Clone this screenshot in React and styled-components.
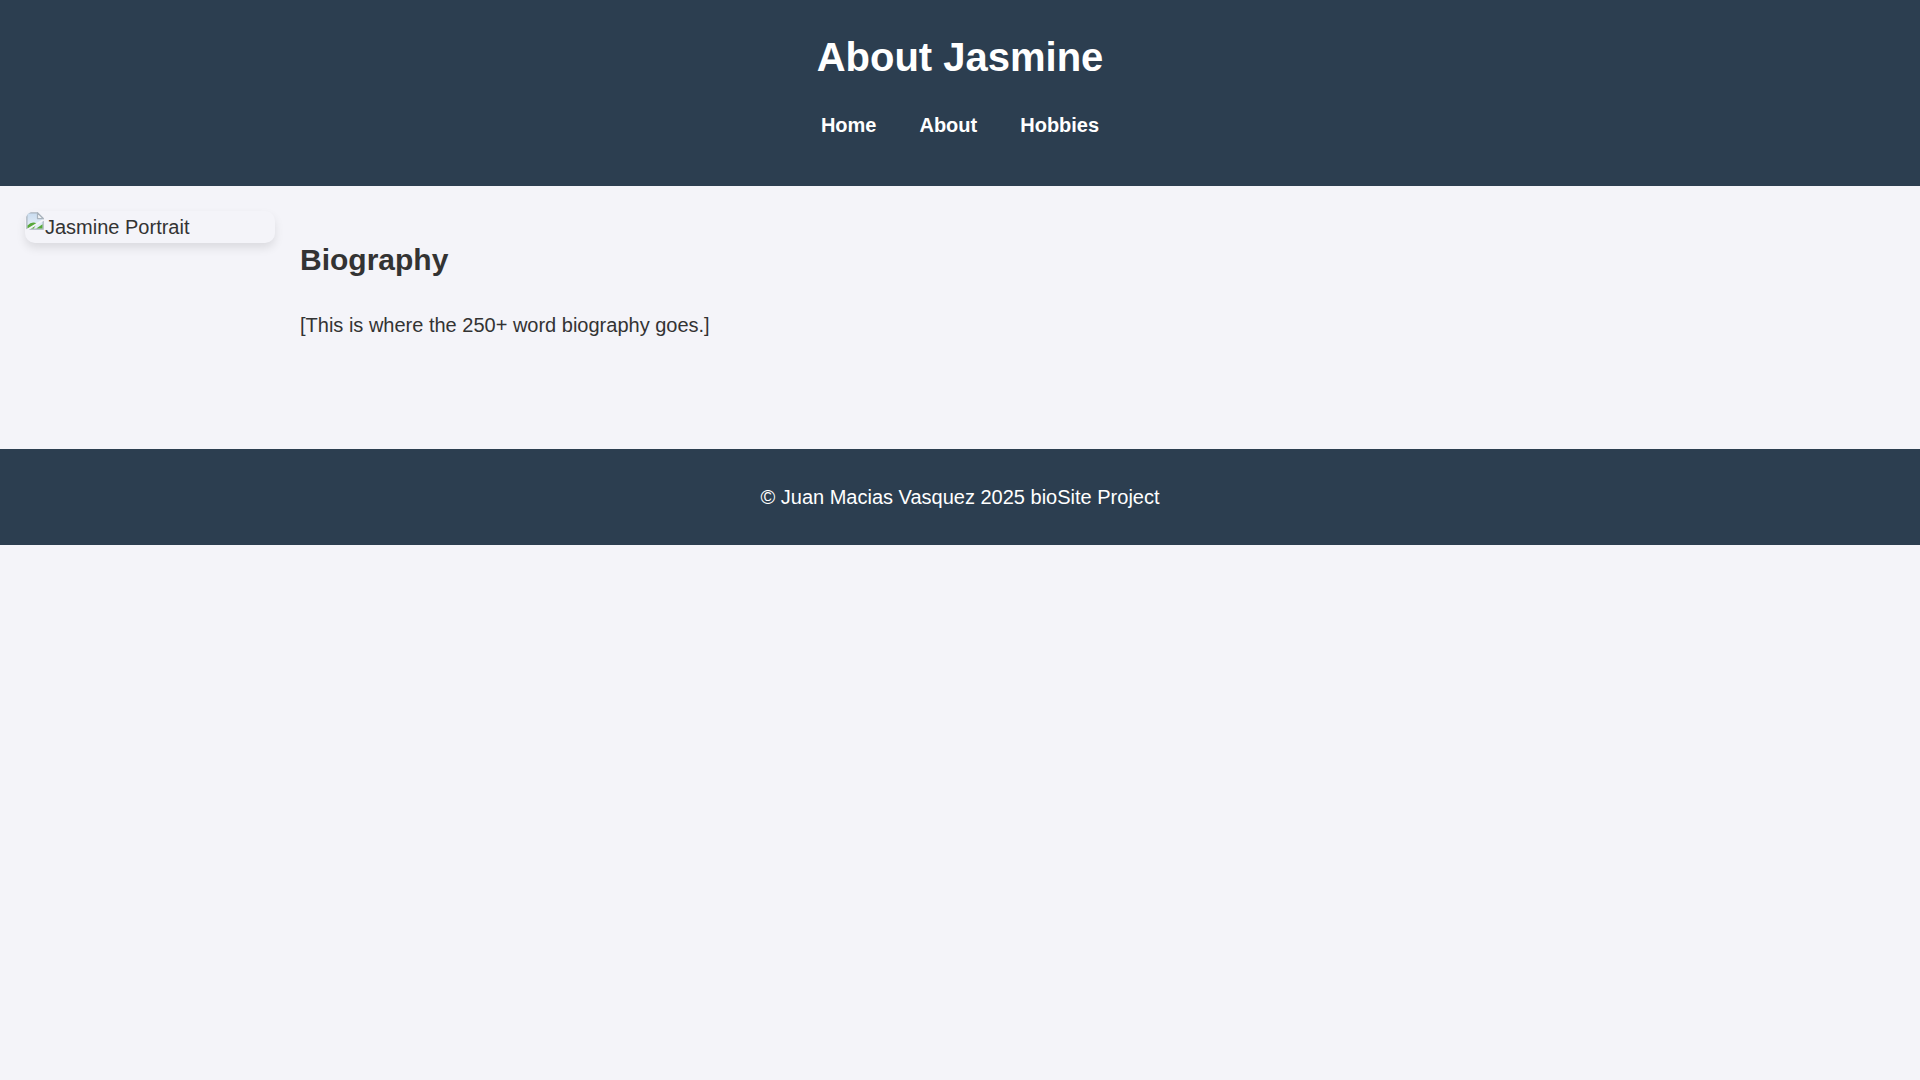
import React from "react";
import styled, { createGlobalStyle } from "styled-components";

const GlobalStyle = createGlobalStyle`
  html, body {
    margin: 0;
    padding: 0;
    background: #f4f4f9;
  }
  body {
    font-family: "Liberation Sans", Arial, sans-serif;
    color: #333;
    font-size: 20px;
  }
  * { box-sizing: border-box; }
`;

const Header = styled.header`
  background: #2c3e50;
  color: #fff;
  text-align: center;
  padding: 34px 20px 49px;
`;

const Title = styled.h1`
  margin: 0;
  font-size: 40px;
  font-weight: 700;
  line-height: 46px;
`;

const NavList = styled.ul`
  list-style: none;
  margin: 34px 0 0;
  padding: 0;
  display: flex;
  justify-content: center;
  gap: 43px;
`;

const NavLink = styled.a`
  color: #fff;
  text-decoration: none;
  font-weight: 700;
  font-size: 20px;
  line-height: 23px;
`;

const Main = styled.main`
  display: flex;
  align-items: flex-start;
  gap: 25px;
  padding: 25px 25px 111.5px;
`;

const Portrait = styled.div`
  flex: 0 0 250px;
  width: 250px;
  height: 32px;
  border-radius: 10px;
  box-shadow: 0 5px 10px rgba(0, 0, 0, 0.1);
  display: flex;
  align-items: flex-start;
  overflow: hidden;
`;

const AltText = styled.span`
  font-size: 20px;
  line-height: 23px;
  margin-top: 5px;
  color: #333;
  white-space: nowrap;
`;

const Bio = styled.section`
  flex: 1;
`;

const BioTitle = styled.h2`
  margin: 32.4px 0 0;
  font-size: 30px;
  font-weight: 700;
  line-height: 34.5px;
`;

const BioText = styled.p`
  margin: 36.6px 0 0;
  font-size: 20px;
  line-height: 23px;
`;

const Footer = styled.footer`
  background: #2c3e50;
  color: #fff;
  text-align: center;
  padding: 37px 20px 36px;
  font-size: 20px;
  line-height: 23px;
`;

const FooterText = styled.p`
  margin: 0;
`;

const BrokenIcon = () => (
  <svg width="20" height="20" viewBox="0 0 16 16" style={{ flex: "0 0 20px" }}>
    <defs>
      <linearGradient id="sky" x1="0" y1="0" x2="0" y2="1">
        <stop offset="0" stopColor="#c9dcf0" />
        <stop offset="1" stopColor="#eaf1f8" />
      </linearGradient>
    </defs>
    <path d="M1.5 1.5 H10 L14.5 6 V14.5 H1.5 Z" fill="url(#sky)" stroke="#a9b3bd" strokeWidth="1" />
    <path d="M10 1.5 V6 H14.5 Z" fill="#f2f4f6" stroke="#a9b3bd" strokeWidth="1" strokeLinejoin="round" />
    <path d="M2 14 V11.5 Q5.5 8 9.5 10 L7 14 Z" fill="#57a83a" />
    <path d="M9 14 L14 10.5 V14 Z" fill="#57a83a" />
    <path d="M1 15.5 L15 7" stroke="#f4f4f9" strokeWidth="1.6" />
  </svg>
);

export default function App() {
  return (
    <>
      <GlobalStyle />
      <Header>
        <Title>About Jasmine</Title>
        <nav>
          <NavList>
            <li><NavLink href="#">Home</NavLink></li>
            <li><NavLink href="#">About</NavLink></li>
            <li><NavLink href="#">Hobbies</NavLink></li>
          </NavList>
        </nav>
      </Header>
      <Main>
        <Portrait role="img" aria-label="Jasmine Portrait">
          <BrokenIcon />
          <AltText>Jasmine Portrait</AltText>
        </Portrait>
        <Bio>
          <BioTitle>Biography</BioTitle>
          <BioText>[This is where the 250+ word biography goes.]</BioText>
        </Bio>
      </Main>
      <Footer>
        <FooterText>© Juan Macias Vasquez 2025 bioSite Project</FooterText>
      </Footer>
    </>
  );
}
